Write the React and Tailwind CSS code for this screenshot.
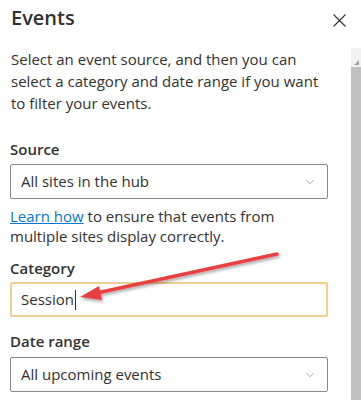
import { ChevronDown } from "lucide-react";

const Dropdown = ({ value }) => (
  <div className="flex h-[35px] items-center justify-between rounded-[2px] border border-[#8a8886] pl-[10px] pr-[10px]">
    <span>{value}</span>
    <ChevronDown className="h-[14px] w-[14px] text-[#8a8886]" strokeWidth={1.2} />
  </div>
);

const App = () => {
  return (
    <div
      className="relative h-[400px] w-[361px] overflow-hidden bg-white text-[#323130]"
      style={{ fontFamily: '"Open Sans", "Noto Sans", sans-serif' }}
    >
      <div className="flex h-[48px] items-start justify-between pl-[11px] pr-[15px] pt-[4px]">
        <h1 className="text-[20px] font-semibold leading-[28px]">Events</h1>
        {/* close */}
        <svg className="mt-[10px]" width="13" height="13" viewBox="0 0 13 13">
          <path d="M0.5 0.5 L12.5 12.5 M12.5 0.5 L0.5 12.5" stroke="#323130" strokeWidth="1.1" />
        </svg>
      </div>

      <div className="flex">
        <div className="flex-1 pl-[10px] pr-[23px] text-[15px]">
          <p className="pl-[1px] leading-[22px]">
            Select an event source, and then you can select a category and date range if you want to filter
            your events.
          </p>

          <div className="mt-[24px] mb-[4px] font-semibold leading-[22px]">Source</div>
          <Dropdown value="All sites in the hub" />

          <p className="mt-[7px] leading-[20px]">
            <a className="text-[#0078d4] underline">Learn how</a> to ensure that events from multiple sites
            display correctly.
          </p>

          <div className="mt-[11px] mb-[3px] font-semibold leading-[22px]">Category</div>
          <div className="flex h-[35px] items-center rounded-[2px] border-2 border-[#f1cf93] pl-[9px]">
            <span>Session</span>
            <span className="ml-[1px] h-[20px] w-[1px] bg-[#323130]" />
          </div>

          <div className="mt-[13px] mb-[5px] font-semibold leading-[22px]">Date range</div>
          <Dropdown value="All upcoming events" />
        </div>

        <div className="flex h-[352px] w-[10px] flex-col">
          <div className="flex h-[19px] items-end justify-end bg-[#f1f1f1] p-[2px]">
            <div className="h-0 w-0 border-b-[5px] border-l-[5px] border-b-[#a3a3a3] border-l-transparent" />
          </div>
          <div className="flex-1 bg-[#c1c1c1]" />
        </div>
      </div>

      <svg className="pointer-events-none absolute left-0 top-0" width="361" height="400">
        <defs>
          <filter id="sh" x="-20%" y="-50%" width="140%" height="200%">
            <feDropShadow dx="1" dy="2" stdDeviation="1.5" floodColor="#000" floodOpacity="0.35" />
          </filter>
        </defs>
        <g filter="url(#sh)">
          <line x1="277" y1="254" x2="92" y2="294" stroke="#e8403f" strokeWidth="3.5" strokeLinecap="round" />
          <polygon points="80,297 99,286 102,300" fill="#e8403f" />
        </g>
      </svg>
    </div>
  );
};

export default App;
